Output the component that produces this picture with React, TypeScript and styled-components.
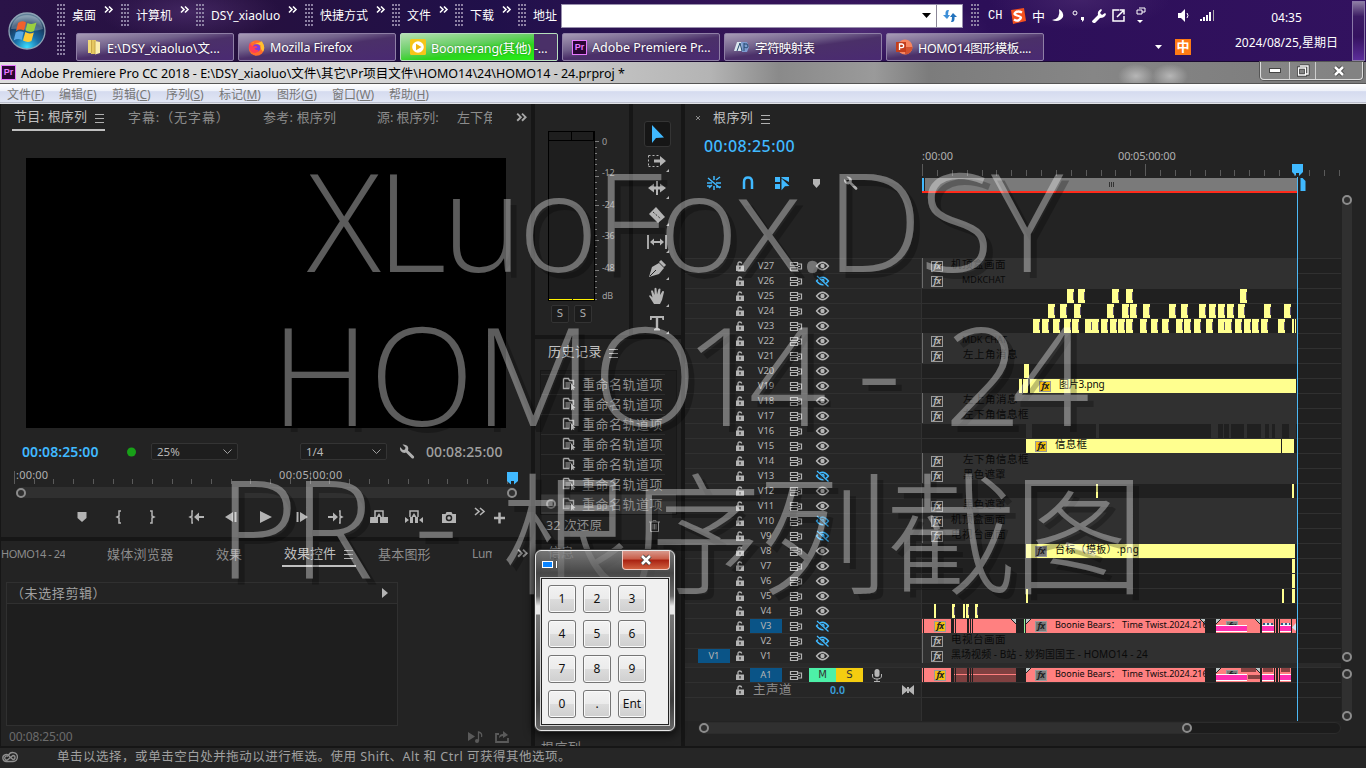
import React from 'react';
import styled, { createGlobalStyle, css } from 'styled-components';

const UI = `"Noto Sans", "Noto Sans CJK SC", sans-serif`;
const BLUE = '#40b9ff';

const GlobalStyle = createGlobalStyle`
  * { box-sizing: border-box; }
  html, body { margin: 0; background: #161616; overflow: hidden; }
  body { font-family: ${UI}; font-size: 12px; color: #a8a8a8; }
  svg { display: block; flex: none; overflow: visible; }
`;

const Screen = styled.div`
  position: relative;
  width: 1366px;
  height: 768px;
  overflow: hidden;
  display: flex;
  flex-direction: column;
  background: #161616;
`;

const Label = styled.span<{ $c?: string; $s?: number; $ls?: number; $ml?: number; $w?: number; $b?: number }>`
  display: block;
  flex: none;
  white-space: nowrap;
  overflow: ${p => (p.$w ? 'hidden' : 'visible')};
  color: ${p => p.$c ?? '#a0a0a0'};
  font-size: ${p => p.$s ?? 13}px;
  letter-spacing: ${p => p.$ls ?? 0}px;
  margin-left: ${p => p.$ml ?? 0}px;
  width: ${p => (p.$w ? `${p.$w}px` : 'auto')};
  font-weight: ${p => p.$b ?? 400};
  line-height: 18px;
`;

const Gap = styled.div<{ $w: number }>`
  flex: none;
  width: ${p => p.$w}px;
`;

/* ---------- Taskbar ---------- */

const Taskbar = styled.header`
  height: 62px;
  flex: none;
  display: flex;
  color: #fff;
  background:
    radial-gradient(ellipse 90px 30px at 190px 12px, #4f3070aa, transparent),
    radial-gradient(ellipse 130px 34px at 860px 30px, #53307acc, transparent),
    radial-gradient(ellipse 90px 30px at 1080px 0, #4a2a70aa, transparent),
    linear-gradient(90deg, #2a1348 0, #26103f 18%, #20104a 36%, #351458 55%, #2c0f58 72%, #32125f 100%);
  border-bottom: 1px solid #1a0a30;
`;
const StartArea = styled.div`
  width: 57px;
  flex: none;
  padding: 12px 0 0 8px;
`;
const Bars = styled.div`
  width: 931px;
  flex: none;
  display: flex;
  flex-direction: column;
`;
const QuickRow = styled.div`
  display: flex;
  align-items: center;
  height: 31px;
`;
const Toolbar = styled.div<{ $w: number }>`
  width: ${p => p.$w}px;
  flex: none;
  display: flex;
  align-items: center;
`;
const Grip = styled.i`
  width: 9px;
  height: 23px;
  margin-right: 6px;
  flex: none;
  background-image: radial-gradient(circle at 1px 1px, #8f83a5 0.7px, transparent 1px);
  background-size: 3px 4px;
`;
const More = styled.span`
  margin: -14px 0 0 8px;
  height: 6px;
`;
const Address = styled.div`
  display: flex;
  width: 402px;
  height: 24px;
  margin-left: 4px;
  border: 1px solid #9990ad;
  background: #fff;
  align-items: center;
  justify-content: flex-end;
`;
const RefreshBox = styled.div`
  width: 26px;
  height: 22px;
  margin-left: 5px;
  border-left: 1px solid #8b8798;
  display: grid;
  place-items: center;
`;
const TaskRow = styled.div`
  display: flex;
  align-items: flex-start;
  height: 30px;
  padding-top: 2px;
`;
const TaskButton = styled.div<{ $progress?: boolean }>`
  width: 158px;
  height: 28px;
  flex: none;
  margin-right: 4px;
  display: flex;
  align-items: center;
  padding-left: 9px;
  gap: 5px;
  border: 1px solid #8f7fa6;
  border-radius: 2px;
  overflow: hidden;
  white-space: nowrap;
  font-size: 12.5px;
  background: linear-gradient(172deg, #a79bb6 0, #71608a 35%, #4b3069 52%, #4a2a72 100%);
  ${p =>
    p.$progress &&
    css`
      border-color: #b6dfbc;
      background:
        linear-gradient(90deg, transparent 133px, #4a3068 133px),
        linear-gradient(172deg, #b5dfb2 0, #66ce62 40%, #2cd41e 60%, #26f416 100%);
    `}
`;
const TaskText = styled.span<{ $ls?: number }>`
  letter-spacing: ${p => p.$ls ?? 0}px;
  text-shadow: 0 0 2px #0006;
`;
const TrayCol = styled.div`
  width: 232px;
  flex: none;
`;
const TrayRow = styled.div`
  display: flex;
  align-items: center;
  height: 31px;
`;
const ClockCol = styled.div`
  width: 132px;
  flex: none;
  padding: 9px 0 0 1px;
`;
const Clock = styled.div`
  text-align: center;
  font-size: 12px;
  line-height: 17px;
`;
const DateLine = styled(Clock)`
  margin-top: 8px;
`;
const ShowDesktop = styled.div`
  width: 13px;
  height: 60px;
  margin-top: 1px;
  border: 1px solid #8a78a8;
  background: linear-gradient(#8d7da3, #3b1b63 25%, #35125f 60%, #5c2e9a);
`;
const ImeBadge = styled.div`
  width: 16px;
  height: 16px;
  background: #ff7a14;
  font-size: 13px;
  font-weight: 700;
  line-height: 15px;
  text-align: center;
`;
const LangCode = styled.span`
  width: 22px;
  font: 12px "Liberation Mono", monospace;
`;

const Orb = () => (
  <svg width="38" height="38" viewBox="0 0 38 38">
    <defs>
      <radialGradient id="orb" cx=".5" cy=".95" r=".85">
        <stop offset="0" stopColor="#3be0ff" />
        <stop offset=".4" stopColor="#1a6fa8" />
        <stop offset=".8" stopColor="#17375c" />
        <stop offset="1" stopColor="#5f7f98" />
      </radialGradient>
    </defs>
    <circle cx="19" cy="19" r="18" fill="url(#orb)" stroke="#8ea3b5" strokeWidth="1.3" />
    <path d="M3 17Q6 3 19 3T35 17Q27 20 19 18T3 17" fill="#fff" opacity=".25" />
    <path d="M10 11q4-3 8-.5l-2 8q-4-2-8 .5z" fill="#f0602c" />
    <path d="M19.500 11q4 2 9-.5l-2.500 8.500q-4 2-8.500-.5z" fill="#9bcf3f" />
    <path d="M7.700 20.500q4-2.300 8-.5l-2 8q-4-2-8 .5z" fill="#5aa9e8" />
    <path d="M17.300 20q4 2.500 8.500.5l-2.300 8.500q-4 2-8.500-.5z" fill="#ffcb35" />
  </svg>
);
const Chev = ({ c = '#fff', s = 1 }: { c?: string; s?: number }) => (
  <svg width={9 * s} height={7 * s} viewBox="0 0 9 7">
    <path d="M1 .5 4 3.500 1 6.500M5 .5 8 3.500 5 6.500" fill="none" stroke={c} strokeWidth="1.600" />
  </svg>
);
const Folder = () => (
  <svg width="16" height="16" viewBox="0 0 16 16">
    <path d="M2 1h4v13H2z" fill="#f1d979" />
    <path d="M5 1h5v14H5z" fill="#e6c760" />
    <path d="M9 2l5 1v11l-5 1.500z" fill="#fbeeb0" />
    <path d="M5.500 1v13M9 2v13" stroke="#c9a647" />
  </svg>
);
const Firefox = () => (
  <svg width="17" height="17" viewBox="0 0 16 16">
    <circle cx="8" cy="8.500" r="7.300" fill="#ff6a2b" />
    <path d="M3 3Q8 5 13 2q4 6 1 10-3-3-2-6-4-2-9-3" fill="#ffc02e" />
    <circle cx="8" cy="8.500" r="3.500" fill="#7a3fe0" />
    <path d="M2 3q0 3 3 4 3-1 4 1l-3 1q1 2 4 1-2 5-7 2-4-4-1-9" fill="#ff3f55" />
  </svg>
);
const Player = () => (
  <svg width="16" height="16" viewBox="0 0 16 16">
    <rect width="16" height="16" rx="1.500" fill="#f6c619" />
    <circle cx="8" cy="8" r="5.800" fill="#fff" />
    <path d="M6 4.700 11.500 8 6 11.300z" fill="#f0b40f" />
  </svg>
);
const PrLogo = styled.div`
  width: 15px;
  height: 15px;
  flex: none;
  background: #2a0634;
  border: 1px solid #e878ff;
  color: #e878ff;
  font: 700 9px/12px "Liberation Sans", sans-serif;
  letter-spacing: 0;
  text-align: center;
`;
const CharMap = () => (
  <svg width="16" height="12" viewBox="0 0 16 12">
    <path d="M0 10 3 1h5l3 9z" fill="#dbe8ef" />
    <path d="M7 1h6l2 5-2 5H8z" fill="#7d9bd0" />
    <path d="M3 10 6 2l2 8M10 2v8M10 3q4-1 4 2t-4 1" stroke="#254a70" fill="none" />
  </svg>
);
const Ppt = () => (
  <svg width="17" height="16" viewBox="0 0 17 16">
    <circle cx="9" cy="8" r="7.500" fill="#f6855f" />
    <path d="M9 8h7.500A7.500 7.500 0 0 1 9 15.500z" fill="#d35230" />
    <rect x="0" y="3" width="10" height="10" fill="#c43e1c" />
    <path d="M3.500 11V5h2.300a1.800 1.800 0 0 1 0 3.700H3.500" fill="none" stroke="#fff" strokeWidth="1.300" />
  </svg>
);

const quick: [string, number, number][] = [
  ['桌面', 64, 0],
  ['计算机', 75, 0],
  ['DSY_xiaoluo', 109, 0.05],
  ['快捷方式', 87, 0],
  ['文件', 63, 0],
  ['下载', 63, 0],
];

const TaskbarView = () => (
  <Taskbar>
    <StartArea>
      <Orb />
    </StartArea>
    <Bars>
      <QuickRow>
        {quick.map(([t, w, ls]) => (
          <Toolbar $w={w} key={t}>
            <Grip />
            <Label $c="#fff" $s={12} $ls={ls}>{t}</Label>
            <More><Chev /></More>
          </Toolbar>
        ))}
        <Toolbar $w={453}>
          <Grip />
          <Label $c="#fff" $s={12}>地址</Label>
          <Address>
            <svg width="9" height="5"><path d="M0 0h9L4.500 5z" fill="#000" /></svg>
            <RefreshBox>
              <svg width="16" height="14" viewBox="0 0 16 14">
                <path d="M6 1Q3 1 3.500 6H1l4 4 3-4H6q0-3 1-5z" fill="#3d8fd8" />
                <path d="M10 13q3 0 2.500-5H15l-4-4-3 4h2q0 3-1 5z" fill="#2272bd" />
              </svg>
            </RefreshBox>
          </Address>
        </Toolbar>
        <Grip />
      </QuickRow>
      <TaskRow>
        <Grip />
        <Gap $w={4} />
        <TaskButton><Folder /><TaskText $ls={-0.05}>E:\DSY_xiaoluo\文...</TaskText></TaskButton>
        <TaskButton><Firefox /><TaskText $ls={-0.15}>Mozilla Firefox</TaskText></TaskButton>
        <TaskButton $progress><Player /><TaskText $ls={-0.15}>Boomerang(其他) -...</TaskText></TaskButton>
        <TaskButton><PrLogo>Pr</PrLogo><TaskText $ls={0}>Adobe Premiere Pr...</TaskText></TaskButton>
        <TaskButton><CharMap /><TaskText $ls={-0.6}>字符映射表</TaskText></TaskButton>
        <TaskButton><Ppt /><TaskText $ls={-0.35}>HOMO14图形模板....</TaskText></TaskButton>
      </TaskRow>
    </Bars>
    <TrayCol>
      <TrayRow>
        <LangCode>CH</LangCode>
        <svg width="16" height="16" viewBox="0 0 16 16">
          <path d="M1 2 14 0l2 13-13 3z" fill="#f4511e" />
          <path d="M12 4.500Q8 2.500 5.500 4.500T7 7.500t4 2T9 12 4 11.500" fill="none" stroke="#fff" strokeWidth="2.300" />
        </svg>
        <Gap $w={6} />
        <Label $c="#fff" $s={13} $w={20}>中</Label>
        <svg width="12" height="13" viewBox="0 0 12 13"><path d="M7 0q5 3 4 8-4 6-11 3 9-1 7-11" fill="#fff" /></svg>
        <Gap $w={8} />
        <svg width="14" height="12" viewBox="0 0 14 12">
          <circle cx="3" cy="3" r="2" fill="none" stroke="#fff" /><path d="M9 7h3v3l-2 2v-2H9z" fill="#fff" />
        </svg>
        <Gap $w={6} />
        <svg width="14" height="14" viewBox="0 0 14 14"><path d="M0 12 6 6Q5 2 9 0l1 1-2 3 2 2 3-2 1 1q-1 4-6 4l-5 5q-3 0-3-2" fill="#fff" /></svg>
        <Gap $w={6} />
        <svg width="13" height="13" viewBox="0 0 13 13"><path d="M7 1H1v11h11V7M5 8l6-6M7.500 1H12v4.500" fill="none" stroke="#fff" strokeWidth="1.500" /></svg>
        <Gap $w={11} />
        <svg width="10" height="17" viewBox="0 0 10 17"><path d="M3 1h6v4M1 3h5v4H1zM6 5h3" fill="none" stroke="#fff" /><path d="M1 13h6L4 16z" fill="#fff" /></svg>
        <Gap $w={32} />
        <svg width="13" height="13" viewBox="0 0 13 13"><path d="M0 4h3l4-4v13L3 9H0z" fill="#fff" /><path d="M9 4q2 2.500 0 5" stroke="#fff" fill="none" /></svg>
        <Gap $w={9} />
        <svg width="16" height="11" viewBox="0 0 16 11"><path d="M1 11V9M4 11V7M7 11V5M10 11V2" stroke="#fff" strokeWidth="2" /><path d="M13.500 11V0" stroke="#aaa" /></svg>
      </TrayRow>
      <TrayRow>
        <Gap $w={167} />
        <svg width="7" height="4"><path d="M0 0h7L3.500 4z" fill="#fff" /></svg>
        <Gap $w={13} />
        <ImeBadge>中</ImeBadge>
      </TrayRow>
    </TrayCol>
    <ClockCol>
      <Clock>04:35</Clock>
      <DateLine>2024/08/25,星期日</DateLine>
    </ClockCol>
    <ShowDesktop />
  </Taskbar>
);

/* ---------- Title and menu ---------- */

const TitleBar = styled.div`
  height: 22px;
  flex: none;
  display: flex;
  align-items: center;
  padding-left: 1px;
  gap: 5px;
  color: #000;
  font-size: 12.5px;
  letter-spacing: 0;
  white-space: nowrap;
  background:
    radial-gradient(ellipse 18px 12px at 1136px 14px, #b6b6b6, transparent),
    radial-gradient(ellipse 18px 12px at 1170px 14px, #b6b6b6, transparent),
    linear-gradient(90deg, #dedede 0, #d4d4d4 35%, #b4b4b4 52%, #8a8a8a 57%, #9a9a9a 64%, #7c7c7c 68%, #868686 80%, #7a7a7a 100%);
  border-bottom: 1px solid #555;
`;
const WindowButtons = styled.div`
  margin: -3px 3px 0 auto;
  display: flex;
  width: 103px;
  height: 18px;
  border: 1px solid #ddd;
  border-top: 0;
  border-radius: 0 0 4px 4px;
  background: #8b8b8b88;
  box-shadow: 0 0 0 1px #555;
`;
const WinBtn = styled.div<{ $w: number }>`
  width: ${p => p.$w}px;
  display: grid;
  place-items: center;
  & + & { border-left: 1px solid #ccc; }
`;
const MenuBar = styled.nav`
  height: 20px;
  flex: none;
  display: flex;
  align-items: center;
  padding-left: 7px;
  background: linear-gradient(#fff 0, #eef1f9 35%, #d5dbef 38%, #e1e6f4 90%, #b8bccb 92%, #f4f4f4 100%);
`;
const MenuItem = styled.span<{ $w: number }>`
  width: ${p => p.$w}px;
  flex: none;
  font-size: 12px;
  color: #777;
  letter-spacing: -0.05px;
`;
const menus: [string, string, number][] = [
  ['文件', 'F', 52], ['编辑', 'E', 53], ['剪辑', 'C', 54], ['序列', 'S', 53],
  ['标记', 'M', 58], ['图形', 'G', 55], ['窗口', 'W', 57], ['帮助', 'H', 60],
];

/* ---------- Workspace ---------- */

const Workspace = styled.main`
  height: 642px;
  flex: none;
  display: flex;
  gap: 4px;
  padding-left: 1px;
`;
const Column = styled.div<{ $w: number }>`
  width: ${p => p.$w}px;
  flex: none;
  display: flex;
  flex-direction: column;
  gap: 4px;
`;
const Panel = styled.section<{ $h?: number; $w?: number }>`
  background: #232323;
  flex: none;
  height: ${p => (p.$h ? `${p.$h}px` : 'auto')};
  width: ${p => (p.$w ? `${p.$w}px` : 'auto')};
  overflow: hidden;
  display: flex;
  flex-direction: column;
`;
const Row = styled.div<{ $h: number; $pl?: number; $mt?: number; $pb?: number }>`
  height: ${p => p.$h}px;
  flex: none;
  display: flex;
  align-items: center;
  padding-left: ${p => p.$pl ?? 0}px;
  padding-bottom: ${p => p.$pb ?? 0}px;
  margin-top: ${p => p.$mt ?? 0}px;
`;
const Tab = styled.div<{ $active?: boolean; $w: number }>`
  display: flex;
  flex: none;
  align-items: center;
  width: ${p => p.$w}px;
  height: 27px;
  padding-left: 2px;
  gap: 8px;
  border-bottom: 2px solid ${p => (p.$active ? '#c0c0c0' : 'transparent')};
`;
const BurgerSvg = styled.svg`
  margin-top: 4px;
`;
const Burger = () => (
  <BurgerSvg width="9" height="9" viewBox="0 0 9 9"><path d="M0 .5h9M0 4.500h9M0 8.500h9" stroke="#b0b0b0" /></BurgerSvg>
);

const Video = styled.div`
  width: 480px;
  height: 270px;
  margin: 27px 0 0 25px;
  background: #000;
  flex: none;
`;
const Select = styled.div<{ $w: number }>`
  width: ${p => p.$w}px;
  height: 17px;
  border: 1px solid #343434;
  border-radius: 2px;
  background: #1e1e1e;
  display: flex;
  align-items: center;
  justify-content: space-between;
  padding: 0 5px;
  font-size: 11.5px;
  color: #b8b8b8;
`;
const Down = () => (
  <svg width="9" height="5" viewBox="0 0 9 5"><path d="M.5.5l4 4 4-4" fill="none" stroke="#a0a0a0" /></svg>
);
const Wrench = () => (
  <svg width="15" height="15" viewBox="0 0 15 15">
    <path d="M2.500.5 5.500 3.500 5 5.500 3 6 0 3q-.5 4 2.500 5.500 2 .8 3.500 0L11.500 14q1 1 2.200.2 1-1.200 0-2.200L8 6.500Q9 4 7.500 2 5.500 0 2.500.5z" fill="#b0b0b0" />
  </svg>
);
const RulerBox = styled.div<{ $h: number }>`
  position: relative;
  height: ${p => p.$h}px;
  flex: none;
`;
const RulerLabel = styled.span<{ $x: number; $top: number; $ls?: number }>`
  position: absolute;
  left: ${p => p.$x}px;
  top: ${p => p.$top}px;
  font-size: 11px;
  line-height: 12px;
  letter-spacing: ${p => p.$ls ?? 0}px;
  color: #b0b0b0;
`;
const ZoomTrack = styled.div`
  width: 501px;
  height: 11px;
  margin: 4px 0 0 15px;
  flex: none;
  border-radius: 6px;
  background: #303030;
  display: flex;
  justify-content: space-between;
  align-items: center;
`;
const Knob = styled.i`
  width: 10px;
  height: 10px;
  flex: none;
  border: 2px solid #8c8c8c;
  border-radius: 50%;
`;
const G = '#b4b4b4';
const transport: [number, React.ReactNode][] = [
  [82, <path key="a" d="M-4.500-5h9v6L0 5l-4.500-4z" fill={G} />],
  [119, <path key="b" d="M2-6H0v5l-2 1 2 1v5h2" stroke={G} strokeWidth="1.500" fill="none" />],
  [152, <path key="c" d="M-2-6H0v5l2 1-2 1v5h-2" stroke={G} strokeWidth="1.500" fill="none" />],
  [197, <g key="d"><path d="M-4-6h-1v5l-2 1 2 1v5h1" stroke={G} strokeWidth="1.500" fill="none" /><path d="M-3 0 2-4.500V-1h5v2H2v3.500z" fill={G} /></g>],
  [231, <path key="e" d="M-6 0 2-5V5zM3.500-5h2V5h-2z" fill={G} />],
  [266, <path key="f" d="M-6-6 6 0-6 6z" fill={G} />],
  [302, <path key="g" d="M6 0-2-5V5zM-3.500-5h-2V5h2z" fill={G} />],
  [335, <g key="h"><path d="M4-6h1v5l2 1-2 1v5h-1" stroke={G} strokeWidth="1.500" fill="none" /><path d="M3 0-2-4.500V-1h-5v2h5v3.500z" fill={G} /></g>],
  [379, <g key="i"><path d="M-9 0h8v6h-8zM1 0h8v6h-8z" fill={G} /><path d="M-4 0v-6h8v6" stroke={G} strokeWidth="1.500" fill="none" /><path d="M0-4l2.500 4h-5z" fill={G} /></g>],
  [414, <g key="j"><path d="M-9 0l4 3-4 3zM9 0 5 3l4 3zM-4 0h3v6h-3zM1 0h3v6H1z" fill={G} /><path d="M-4 0v-6h8v6" stroke={G} strokeWidth="1.500" fill="none" /><path d="M0-4l2.500 4h-5z" fill={G} /></g>],
  [449, <g key="k"><path d="M-7-3h3.500l1-2h5l1 2H7v9H-7z" fill={G} /><circle cx="0" cy="1" r="2.500" fill="none" stroke="#232323" strokeWidth="1.500" /></g>],
  [480, <path key="l" d="M-5-9l4 3.500-4 3.500M0-9l4 3.500L0-2" stroke={G} strokeWidth="1.600" fill="none" />],
  [499, <path key="m" d="M-5 1H6M.5-4.500v11" stroke={G} strokeWidth="2.500" fill="none" />],
];

const ProgramPanel = () => (
  <Panel $h={433}>
    <Row $h={27} $pl={11} $pb={1}>
      <Tab $active $w={93}><Label $c="#c0c0c0" $ls={0.2}>节目: 根序列</Label><Burger /></Tab>
      <Label $ml={23} $w={110} $c="#8c8c8c" $ls={0.9}>字幕:（无字幕）</Label>
      <Label $ml={25} $w={90} $c="#8c8c8c" $ls={0.2}>参考: 根序列</Label>
      <Label $ml={24} $w={66} $c="#8c8c8c" $ls={-0.1}>源: 根序列:</Label>
      <Label $ml={14} $w={35} $c="#8c8c8c">左下角</Label>
      <Gap $w={24} />
      <Chev c="#a8a8a8" s={1.2} />
    </Row>
    <Video />
    <Row $h={25} $mt={11}>
      <Label $ml={21} $w={104} $c={BLUE} $s={14} $b={600} $ls={0.08}>00:08:25:00</Label>
      <svg width="10" height="10"><circle cx="5.500" cy="5" r="4.500" fill="#18a018" /></svg>
      <Gap $w={15} />
      <Select $w={87}>25%<Down /></Select>
      <Gap $w={62} />
      <Select $w={87}>1/4<Down /></Select>
      <Gap $w={13} />
      <Wrench />
      <Label $ml={11} $c="#a0a0a0" $s={14} $b={500} $ls={0.1}>00:08:25:00</Label>
    </Row>
    <RulerBox $h={19}>
      <RulerLabel $x={15} $top={5} $ls={0.2}>:00:00</RulerLabel>
      <RulerLabel $x={278} $top={5} $ls={0.4}>00:05:00:00</RulerLabel>
      <svg width="530" height="19">
        {Array.from({ length: 26 }, (_, i) => (
          <path key={i} d={`M${Math.round(13 + i * 19.700) + 0.5} ${i % 15 === 0 ? 7 : 15}V20`} stroke="#5a5a5a" />
        ))}
        <g transform="translate(506 8)"><path d="M0 0h11v9l-4 3.500V9H4v3.500L0 9z" fill={BLUE} /></g>
      </svg>
    </RulerBox>
    <ZoomTrack><Knob /><Knob /></ZoomTrack>
    <Row $h={38}>
      <svg width="530" height="30">
        {transport.map(([x, g]) => <g key={x} transform={`translate(${x - 1} 15)`}>{g}</g>)}
      </svg>
    </Row>
  </Panel>
);

const EffectBox = styled.div`
  width: 392px;
  height: 144px;
  margin: 14px 0 0 5px;
  flex: none;
  border: 1px solid #303030;
  background: #1e1e1e;
`;
const EffectHead = styled.div`
  height: 21px;
  display: flex;
  align-items: center;
  justify-content: space-between;
  padding: 0 9px 1px 4px;
  background: #232323;
  border-bottom: 1px solid #303030;
`;
const EffectPanel = () => (
  <Panel $h={205}>
    <Row $h={27} $pb={2}>
      <Label $ml={0} $w={64} $s={11} $c="#8c8c8c" $ls={-0.5}>HOMO14 - 24</Label>
      <Label $ml={42} $w={67} $c="#8c8c8c" $ls={0.3}>媒体浏览器</Label>
      <Label $ml={42} $w={28} $c="#8c8c8c">效果</Label>
      <Gap $w={38} />
      <Tab $active $w={74}><Label $c="#c0c0c0">效果控件</Label><Burger /></Tab>
      <Label $ml={22} $w={54} $c="#8c8c8c" $ls={0.2}>基本图形</Label>
      <Label $ml={40} $w={20} $s={12} $c="#8c8c8c" $ls={-0.3}>Lumetri</Label>
      <Gap $w={25} />
      <Chev c="#a8a8a8" s={1.2} />
    </Row>
    <EffectBox>
      <EffectHead>
        <Label $c="#a0a0a0" $ls={0.6}>（未选择剪辑）</Label>
        <svg width="6" height="10"><path d="M0 0l6 5-6 5z" fill="#b4b4b4" /></svg>
      </EffectHead>
    </EffectBox>
    <Row $h={21} $pl={8}>
      <Label $s={12} $c="#6c6c6c" $ls={-0.1} $w={459}>00:08:25:00</Label>
      <svg width="15" height="12" viewBox="0 0 15 12"><path d="M0 1l7 4.500L0 10z" fill="#5a5a5a" /><path d="M10.500 10V1q4 1 3 5" fill="none" stroke="#5a5a5a" strokeWidth="1.300" /><circle cx="9" cy="10" r="2" fill="#5a5a5a" /></svg>
      <Gap $w={12} />
      <svg width="14" height="12" viewBox="0 0 14 12"><path d="M4 3H1v8h12V7" fill="none" stroke="#5a5a5a" strokeWidth="1.800" /><path d="M4 7q0-4 4-4V0l5 4-5 3V5q-2 0-4 2" fill="#5a5a5a" /></svg>
    </Row>
  </Panel>
);

/* ---------- Meters & tools ---------- */

const Split = styled.div`
  display: flex;
  gap: 4px;
  flex: none;
`;
const MeterBody = styled.div`
  display: flex;
  margin: 27px 0 0 13px;
`;
const Meter = styled.div`
  width: 47px;
  height: 170px;
  border: 1px solid #000;
  background: #1e1e1e;
  display: grid;
  grid-template-columns: 1fr 1fr;
  grid-template-rows: 9px 1fr;
`;
const MeterCell = styled.div<{ $bar?: boolean }>`
  border-bottom: ${p => (p.$bar ? '1px solid #fff200' : '1px solid #000')};
  border-right: ${p => (p.$bar ? 0 : '1px solid #000')};
`;
const MeterGap = styled(MeterCell)`
  margin-left: 1px;
`;
const Scale = styled.div`
  width: 22px;
  margin: 4px 0 0 2px;
  display: flex;
  flex-direction: column;
  font-size: 9px;
  line-height: 14px;
  letter-spacing: -0.3px;
`;
const ScaleMark = styled.span<{ $h: number }>`
  height: ${p => p.$h}px;
  color: #a0a0a0;
`;
const SoloRow = styled.div`
  display: flex;
  gap: 5px;
  margin: 4px 0 0 16px;
`;
const Solo = styled.div`
  width: 18px;
  height: 18px;
  border: 1px solid #333;
  border-radius: 2px;
  background: #1c1c1c;
  text-align: center;
  font: 10px/16px "DejaVu Sans", sans-serif;
  color: #a8a8a8;
`;
const ToolList = styled.div`
  display: flex;
  flex-direction: column;
  align-items: center;
  padding-top: 17px;
`;
const ToolCell = styled.div<{ $active?: boolean }>`
  width: 27px;
  height: ${p => (p.$active ? 26 : 27)}px;
  display: grid;
  place-items: center;
  border: 1px solid ${p => (p.$active ? '#343434' : 'transparent')};
  border-radius: 3px;
  background: ${p => (p.$active ? '#161616' : 'transparent')};
`;
const tools: React.ReactNode[] = [
  <path key="0" d="M-5-9 7 3.500-1 4-5 9z" fill={BLUE} />,
  <g key="1"><path d="M-8.500-5.500h10M-8.500 5.500h10M-8.500-5.500v11" stroke={G} strokeDasharray="2 2" fill="none" /><path d="M-3-1.500h6V-5L9 0 3 5V1.500h-6z" fill={G} /></g>,
  <path key="2" d="M-1-7h2V7h-2zM-9 0l6-4.500v3h2v3h-2v3zM9 0 3 4.500v-3H1v-3h2v-3z" fill={G} />,
  <g key="3"><path d="M-8-1-1-8 8 2 1 8z" fill={G} /><path d="M-4-3 4 4" stroke="#333" strokeDasharray="2 1.500" /></g>,
  <g key="4"><path d="M-9-7V7M9-7V7" stroke={G} strokeWidth="1.800" /><path d="M-7 0l4-3.500v2.500h6v-2.500L7 0 3 3.500V1h-6v2.500z" fill={G} /></g>,
  <g key="5"><path d="M-8 8-5-2 2-6 7-1 2 5z" fill={G} /><path d="M3-8 8-3" stroke={G} strokeWidth="3" /><path d="M-7 7-1 1" stroke="#232323" /></g>,
  <path key="6" d="M-3 8-8 0q1-2 3 1l.5.5L-6-5q1-1.500 2 0l1.500 4L-2.500-7.500q1-1.500 2 0L0-1.500 1.500-7q1.500-1 2 0L3-1 5.500-5q1.500-.5 1.500 1L5 4 3 8z" fill={G} />,
  <path key="7" d="M-7-7H7v4H5.500L5-5H1.200V5L3 6v1.500h-6V6l1.800-1V-5H-5l-.5 2H-7z" fill={G} />,
];

/* ---------- History ---------- */

const HistoryBox = styled.div`
  width: 137px;
  height: 145px;
  margin: 4px 0 0 5px;
  border: 1px solid #181818;
  background: #1e1e1e;
  flex: none;
  padding-top: 3px;
`;
const HistoryItem = styled.div<{ $sel?: boolean }>`
  height: 20px;
  width: ${p => (p.$sel ? 135 : 124)}px;
  display: flex;
  align-items: center;
  padding-bottom: 1px;
  border-top: 1px solid #2c2c2c;
  background: ${p => (p.$sel ? '#383838' : 'transparent')};
`;
const HistIcon = () => (
  <svg width="12" height="12" viewBox="0 0 12 12">
    <path d="M.5.500h5l1 2h4V7M.5.500v10h6" fill="none" stroke="#a8a8a8" strokeWidth="1.400" />
    <path d="M2.500 5H8M2.500 7H7M2.500 9H7" stroke="#a8a8a8" />
    <path d="M8 5l4.500 5-2 .2 1 2-2-1L8 12.500z" fill="#b4b4b4" />
  </svg>
);

const MiddleColumn = () => (
  <Column $w={146}>
    <Split>
      <Panel $w={94} $h={231}>
        <MeterBody>
          <Meter><MeterCell /><MeterCell /><MeterCell $bar /><MeterGap $bar /></Meter>
          <svg width="5" height="170">
            {Array.from({ length: 28 }, (_, i) => (
              <path key={i} d={`M0 ${Math.round(10 + i * 5.850) + 0.5}H${i % 5.400 < 1 ? 4 : 2}`} stroke="#7c7c7c" />
            ))}
          </svg>
          <Scale>
            <ScaleMark $h={31}>0</ScaleMark>
            <ScaleMark $h={32}>-12</ScaleMark>
            <ScaleMark $h={31}>-24</ScaleMark>
            <ScaleMark $h={32}>-36</ScaleMark>
            <ScaleMark $h={28}>-48</ScaleMark>
            <ScaleMark $h={12}>dB</ScaleMark>
          </Scale>
        </MeterBody>
        <SoloRow><Solo>S</Solo><Solo>S</Solo></SoloRow>
      </Panel>
      <Panel $w={48} $h={231}>
        <ToolList>
          {tools.map((g, i) => (
            <ToolCell key={i} $active={i === 0}>
              <svg width="24" height="24" viewBox="-12 -12 24 24">
                {g}
                {i > 0 && <path d="M12 8v3H9z" fill={G} />}
              </svg>
            </ToolCell>
          ))}
        </ToolList>
      </Panel>
    </Split>
    <Panel $h={201}>
      <Row $h={27} $pl={13} $pb={3}><Label $c="#c0c0c0" $ls={0.5}>历史记录</Label><Gap $w={7} /><Burger /></Row>
      <HistoryBox>
        {Array.from({ length: 7 }, (_, i) => (
          <HistoryItem key={i} $sel={i === 6}>
            {i === 6 ? <><Gap $w={5} /><Knob /><Gap $w={7} /></> : <Gap $w={22} />}
            <HistIcon />
            <Label $ml={7} $c="#8f8f8f" $ls={0.5}>重命名轨道项</Label>
          </HistoryItem>
        ))}
      </HistoryBox>
      <Row $h={22} $pl={11}>
        <Label $s={12.5} $c="#909090" $w={103} $ls={0.2}>32 次还原</Label>
        <svg width="11" height="12" viewBox="0 0 11 12"><path d="M0 2h11M4 2V.5h3V2M1.500 2v9.500h8V2M4 4v5.500M5.500 4v5.500M7 4v5.500" fill="none" stroke="#909090" /></svg>
      </Row>
    </Panel>
    <Panel $h={202}>
      <Row $h={16} $pl={13}><Label $c="#8c8c8c">信息</Label></Row>
      <Row $h={22} $pl={6} $mt={176}><Label $c="#8c8c8c" $ls={0.4}>根序列</Label></Row>
    </Panel>
  </Column>
);

/* ---------- Timeline ---------- */

const TimelinePanel = styled(Panel)`
  width: 681px;
  height: 642px;
`;
const TopArea = styled.div`
  display: flex;
  height: 154px;
  flex: none;
`;
const TopLeft = styled.div`
  width: 237px;
  display: flex;
  flex-direction: column;
`;
const TopRight = styled.div`
  flex: 1;
  padding-top: 44px;
`;
const WorkBar = styled.div`
  display: flex;
  width: 384px;
  height: 15px;
  align-items: flex-start;
`;
const WorkFill = styled.div`
  width: 376px;
  height: 15px;
  background: linear-gradient(90deg, ${BLUE} 2px, #222 2px, #222 3px, #7a7a7a 3px);
  border-bottom: 2px solid #ff2a1a;
  display: grid;
  place-items: center;
`;
const Tracks = styled.div`
  display: flex;
  height: 463px;
  flex: none;
`;
const TrackTable = styled.div`
  width: 656px;
  height: 463px;
  position: relative;
  background: linear-gradient(90deg, #262626 236px, #303030 236px, #303030 237px, #202020 237px);
`;
const TrackRow = styled.div`
  display: grid;
  grid-template-columns: 237px 419px;
  height: 15px;
  border-top: 1px solid #303030;
`;
const HeadArea = styled.div`
  display: flex;
  align-items: center;
  height: 14px;
`;
const SourcePatch = styled.div`
  width: 51px;
  padding-left: 13px;
`;
const Badge = styled.span<{ $on?: boolean }>`
  display: block;
  width: 32px;
  height: 14px;
  font-size: 9.5px;
  line-height: 14px;
  text-align: center;
  color: #b4b4b4;
  background: ${p => (p.$on ? '#0a5487' : 'transparent')};
`;
const Toggle = styled.span<{ $c: string }>`
  width: 27px;
  height: 14px;
  font: 10px/14px "DejaVu Sans", sans-serif;
  text-align: center;
  color: #333;
  background: ${p => p.$c};
`;
const Lane = styled.div`
  position: relative;
  height: 14px;
`;
const Clip = styled.div<{ $x: number; $w: number; $c: string }>`
  position: absolute;
  top: 0;
  bottom: 0;
  left: ${p => p.$x - 922}px;
  width: ${p => p.$w}px;
  background: ${p => p.$c};
  overflow: hidden;
  display: flex;
  align-items: flex-start;
`;
const Mark = styled(Clip)`
  &::after {
    content: '';
    position: absolute;
    right: 0;
    top: 3px;
    height: 8px;
    width: 1px;
    background: #5d5068;
  }
`;
const GrayLane = styled.div`
  position: absolute;
  left: 0;
  top: -1px;
  width: 375px;
  height: 15px;
  background: #303030;
  border-left: 1px solid #6a6a6a;
`;
const Fx = styled.span<{ $x: number; $c?: string }>`
  position: absolute;
  left: ${p => p.$x}px;
  top: 2px;
  width: 12px;
  height: 11px;
  border: 1px solid #9a9a9a;
  background: ${p => p.$c ?? '#303030'};
  color: ${p => (p.$c ? '#222' : '#b4b4b4')};
  font: italic 700 9px/8px "Noto Sans", sans-serif;
  text-align: center;
  letter-spacing: -0.5px;
`;
const ClipText = styled.span<{ $x: number; $ls?: number; $s?: number }>`
  position: absolute;
  left: ${p => p.$x}px;
  top: -1px;
  white-space: nowrap;
  font-size: ${p => p.$s ?? 10.5}px;
  line-height: 13px;
  letter-spacing: ${p => p.$ls ?? 0}px;
  color: #0a0a0a;
`;

const Lock = () => (
  <svg width="9" height="10" viewBox="0 0 9 10"><path d="M2 5V2.500Q2 1 3.700 1t2 1.500" fill="none" stroke={G} strokeWidth="1.300" /><path d="M0 4.500h8V10H0z" fill={G} /><path d="M4 6v2.500" stroke="#262626" strokeWidth="1.200" /></svg>
);
const Sync = () => (
  <svg width="12" height="9" viewBox="0 0 12 9"><path d="M.5.500h7v3h-7zM.5 5.500h7v3h-7zM8 2h3.500v5H8M8 4.500h2" fill="none" stroke={G} strokeWidth="1.200" /></svg>
);
const Eye = ({ off }: { off?: boolean }) => (
  <svg width="13" height="10" viewBox="0 0 13 10">
    <path d="M.5 5Q6.500-2.500 12.500 5 6.500 12.500.5 5z" fill="none" stroke={off ? BLUE : G} strokeWidth="1.300" />
    <circle cx="6.500" cy="5" r="2.200" fill={off ? BLUE : G} />
    {off && <><path d="M1 1l11 10" stroke="#262626" strokeWidth="2.500" /><path d="M1 0l11.500 10.500" stroke={BLUE} strokeWidth="1.200" /></>}
  </svg>
);
const Mic = () => (
  <svg width="12" height="13" viewBox="0 0 12 13"><rect x="3.500" y="0" width="5" height="8" rx="2.500" fill={G} /><path d="M1.500 5v2q0 3 4.500 3t4.500-3V5M6 10v3M3 12.500h6" stroke={G} fill="none" /></svg>
);

const Y = '#ffff8f';
const P = '#ff8080';
const at = (list: number[], w: number): [number, number][] => list.map(n => [n, w]);

const smalls: Record<string, [number, number][]> = {
  V25: at([1067, 1078, 1112, 1126, 1240], 7),
  V24: at([1048, 1060, 1074, 1107, 1122, 1130, 1143, 1169, 1181, 1199, 1209, 1218, 1227, 1238, 1264, 1284], 6.500),
  V23: [
    ...at([1033, 1042, 1053, 1064, 1072, 1085, 1092, 1101, 1110, 1118, 1126, 1140, 1151, 1162, 1176, 1184, 1194, 1206, 1218, 1225, 1235, 1244, 1252, 1261, 1278], 6.500),
    [1292, 2], [1295, 1],
  ],
  V12: [[1096, 2], [1292, 2]],
  V5: [[1026, 2], [1282, 2], [1292, 2.500]],
  V4: [[934, 2], [952, 3], [963, 2], [966, 3], [975, 3]],
};
const plains: Record<string, [number, number][]> = {
  V20: [[1024, 5]],
  V19: [[1019, 3], [1023, 5], [1030, 266]],
  V15: [[1026, 255], [1282, 12]],
  V8: [[1026, 269]], V7: [[1292, 3]], V6: [[1292, 3]],
};
const grays: Record<string, [string, number, number, number]> = {
  V27: ['机顶盒画面', 29, 10.500, 0.500],
  V26: ['MDKCHAT', 40, 9, 0.100],
  V22: ['MDK CHAT', 40, 9, 0],
  V21: ['左上角消息', 41, 10.500, 0.500],
  V18: ['左上角消息', 41, 10.500, 0.500],
  V17: ['左下角信息框', 41, 10.500, 0.500],
  V14: ['左下角信息框', 41, 10.500, 0.500],
  V13: ['黑色遮罩', 41, 10.500, 0.200],
  V11: ['黑色遮罩', 41, 10.500, 0.200],
  V10: ['机顶盒画面', 29, 10.500, 0.500],
  V9: ['电视台画面', 29, 10.500, 0.500],
  V2: ['电视台画面', 29, 10.500, 0.500],
  V1: ['黑场视频 - B站 - 妙狗国国王 - HOMO14 - 24', 29, 10, 0.050],
};
const hidden = new Set(['V26', 'V13', 'V10', 'V9', 'V3', 'V2']);
const pinkLeft: [number, number][] = [[922, 1.300], [924, 1], [925, 26], [954, 1], [956, 11], [969, 1], [970.500, 1.500], [973, 18.500], [992, 23.500]];

const Corner = styled.i<{ $right?: boolean }>`
  flex: none;
  width: 5px;
  height: 5px;
  margin-left: ${p => (p.$right ? 'auto' : 0)};
  background: linear-gradient(${p => (p.$right ? '225deg' : '135deg')}, #b9c4c4 42%, #222 42%, #222 58%, transparent 58%);
`;
const Magenta = styled.i<{ $w: number }>`
  position: absolute;
  left: 0;
  top: 6px;
  width: ${p => p.$w}px;
  height: 7px;
  background: #ff2fb0;
  border-top: 1px solid #fff;
  border-bottom: 1px solid #fff;
`;
const Wave = styled.i<{ $x: number; $w: number; $light?: boolean }>`
  position: absolute;
  left: ${p => p.$x}px;
  top: ${p => (p.$light ? 4 : 0)}px;
  width: ${p => p.$w}px;
  height: ${p => (p.$light ? 2 : 4)}px;
  background: ${p => (p.$light ? 'repeating-linear-gradient(90deg, #2c5a80 0 2px, #cfe6f5 2px 4px)' : '#8a4242')};
`;
const WaveLow = styled(Wave)`
  top: 7px;
`;

const PinkLane = ({ audio }: { audio?: boolean }) => (
  <>
    {pinkLeft.map(([x, w], i) => (
      <Clip key={i} $x={x} $w={w} $c={audio && i > 2 ? `linear-gradient(#7f4040 6px, ${P} 6px, ${P} 7px, #7f4040 7px)` : P}>
        {i === 2 && <Fx $x={9} $c="#f4c010">fx</Fx>}
        {i === 8 && !audio && <Corner $right />}
      </Clip>
    ))}
    {!audio && <Clip $x={1024} $w={1} $c="#8ff09a" />}
    <Clip $x={1026} $w={179} $c={P}>
      <Corner />
      <Fx $x={9} $c="#777">fx</Fx>
      <ClipText $x={29} $s={9} $ls={-0.02}>Boonie Bears：&nbsp;Time Twist.2024.2160p</ClipText>
      {!audio && <Corner $right />}
    </Clip>
    <Clip $x={1216} $w={44} $c={P}>
      <Corner /><Fx $x={10} $c="#777">fx</Fx>
      <Corner $right />
      <Magenta $w={31} />
      {audio && <><Wave $x={25} $w={15} /><WaveLow $x={32} $w={12} /></>}
    </Clip>
    <Clip $x={1262} $w={12} $c={P}><Magenta $w={12} /><Wave $x={1} $w={10} $light={!audio} /></Clip>
    <Clip $x={1275} $w={1} $c={P} />
    <Clip $x={1278} $w={1} $c={P} />
    <Clip $x={1280} $w={11} $c={P}><Magenta $w={11} /><Wave $x={1} $w={9} $light={!audio} /></Clip>
    {!audio && (
      <Clip $x={1291.500} $w={4.500} $c={P}>
        <svg width="5" height="14"><path d="M5 3v10L0 8.500z" fill="#cfe6f5" /></svg>
      </Clip>
    )}
  </>
);

const darkCuts: [number, number][] = [[1032, 64], [1099, 112], [1218, 5], [1224, 5], [1231, 13], [1247, 14], [1265, 4], [1272, 3], [1282, 7]];

const LaneContent = ({ id }: { id: string }) => {
  if (id === 'V3' || id === 'A1') return <PinkLane audio={id === 'A1'} />;
  const g = grays[id];
  return (
    <>
      {g && <><GrayLane /><Fx $x={9}>fx</Fx><ClipText $x={g[1]} $s={g[2]} $ls={g[3]}>{g[0]}</ClipText></>}
      {id === 'V16' && <><Clip $x={1026} $w={270} $c="#303030" />{darkCuts.map(([x, w]) => <Clip key={x} $x={x} $w={w} $c="#202020" />)}</>}
      {smalls[id]?.map(([x, w], i) => (w > 2.500 ? <Mark key={i} $x={x} $w={w} $c={Y} /> : <Clip key={i} $x={x} $w={w} $c={Y} />))}
      {plains[id]?.map(([x, w], i) => (
        <Clip key={i} $x={x} $w={w} $c={Y}>
          {w > 200 && id === 'V19' && <><Fx $x={9} $c="#f4c010">fx</Fx><ClipText $x={29} $s={10} $ls={-0.200}>图片3.png</ClipText></>}
          {w > 200 && id === 'V15' && <><Fx $x={9} $c="#f4c010">fx</Fx><ClipText $x={29} $ls={0.300}>信息框</ClipText></>}
          {w > 200 && id === 'V8' && <><Fx $x={9} $c="#777">fx</Fx><ClipText $x={29} $s={10} $ls={0.300}>台标（模板）.png</ClipText></>}
        </Clip>
      ))}
    </>
  );
};

const TrackView = ({ id }: { id: string }) => (
  <TrackRow>
    <HeadArea>
      <SourcePatch>{id === 'V1' && <Badge $on>V1</Badge>}</SourcePatch>
      <Lock />
      <Gap $w={5} />
      <Badge $on={id === 'V3' || id === 'A1'}>{id}</Badge>
      <Gap $w={8} />
      <Sync />
      {id === 'A1' ? (
        <><Gap $w={7} /><Toggle $c="#4df0a8">M</Toggle><Toggle $c="#f4cd10">S</Toggle><Gap $w={8} /><Mic /></>
      ) : (
        <><Gap $w={14} /><Eye off={hidden.has(id)} /></>
      )}
    </HeadArea>
    <Lane><LaneContent id={id} /></Lane>
  </TrackRow>
);
const AudioGap = styled.div`
  height: 4px;
  background: #2a2a2a;
`;
const MasterRow = styled.div`
  display: flex;
  align-items: center;
  width: 236px;
  height: 13px;
  padding-left: 51px;
`;
const MasterWrap = styled.div`
  border-top: 1px solid #303030;
  border-bottom: 1px solid #303030;
  height: 16px;
`;
const Playhead = styled.i`
  position: absolute;
  left: 612px;
  top: -81px;
  width: 1px;
  height: 544px;
  background: #4cb8f5;
`;
const VScroll = styled.div`
  width: 10px;
  margin: -63px 0 0 1px;
  display: flex;
  flex-direction: column;
  gap: 7px;
`;
const VBar = styled.div<{ $h: number }>`
  height: ${p => p.$h}px;
  background: #303030;
  border-radius: 5px;
  display: flex;
  flex-direction: column;
  justify-content: space-between;
`;
const HScroll = styled.div`
  width: 643px;
  height: 12px;
  margin: 1px 0 0 13px;
  flex: none;
  border: 1px solid #2c2c2c;
  border-radius: 6px;
  background: #1c1c1c;
`;
const HThumb = styled.div`
  width: 493px;
  height: 10px;
  border-radius: 6px;
  background: #303030;
  display: flex;
  justify-content: space-between;
`;

const Timeline = () => (
  <TimelinePanel>
    <TopArea>
      <TopLeft>
        <Row $h={27} $pl={10} $pb={1}>
          <svg width="6" height="10"><path d="M1 4l4 4M5 4L1 8" stroke="#8c8c8c" /></svg>
          <Label $ml={12} $c="#c0c0c0" $ls={0.4}>根序列</Label>
          <Gap $w={8} />
          <Burger />
        </Row>
        <Row $h={30} $pl={19}>
          <Label $s={16} $c={BLUE} $b={500} $ls={0.45}>00:08:25:00</Label>
        </Row>
        <Row $h={44}>
          <svg width="230" height="16" viewBox="0 0 230 16">
            <g fill="none" stroke={BLUE} strokeWidth="1.500">
              <path d="M22 8h5M31 8h5M29 1v4M29 11v4M23 3l12 10M24 13l3-3M31 5l4-3M22 11h4M31 12h5" />
              <path d="M59 14V7q0-4.500 4-4.500T67 7v7" strokeWidth="2.500" />
            </g>
            <path d="M90 2h5v5h-5zM96.500 2h7.500v5l-7.500-4zM90 9h5v5h-5z" fill={BLUE} />
            <path d="M96.500 3.500l8 7.500-4.500.3-3.500 4z" fill={BLUE} />
            <path d="M128 4h7v5l-3.500 4-3.500-4z" fill={G} />
            <g transform="translate(159 1) scale(.95)"><path d="M2.500.5 5.500 3.500 5 5.500 3 6 0 3q-.5 4 2.500 5.500 2 .8 3.500 0L11.500 14q1 1 2.200.2 1-1.200 0-2.200L8 6.500Q9 4 7.500 2 5.500 0 2.500.5z" fill="#b0b0b0" /></g>
          </svg>
        </Row>
      </TopLeft>
      <TopRight>
        <RulerBox $h={30}>
          <RulerLabel $x={0} $top={2}>:00:00</RulerLabel>
          <RulerLabel $x={196} $top={2} $ls={-0.15}>00:05:00:00</RulerLabel>
          <svg width="420" height="30">
            {Array.from({ length: 29 }, (_, i) => (
              <path key={i} d={`M${Math.round(i * 14.880) + 0.5} ${i % 15 === 0 ? 16 : 22}V28`} stroke="#5a5a5a" />
            ))}
            <path d="M370 16h11v8l-4 4v-3h-3v3l-4-4z" fill={BLUE} />
          </svg>
        </RulerBox>
        <WorkBar>
          <WorkFill><svg width="6" height="5"><path d="M2.500 0v5M4.500 0v5M6.500 0v5" stroke="#333" /></svg></WorkFill>
          <svg width="8" height="13"><path d="M2.500 0h2l3 3v10h-5z" fill={BLUE} /></svg>
        </WorkBar>
      </TopRight>
    </TopArea>
    <Tracks>
      <TrackTable>
        {Array.from({ length: 27 }, (_, i) => <TrackView key={i} id={`V${27 - i}`} />)}
        <AudioGap />
        <TrackView id="A1" />
        <MasterWrap>
          <MasterRow>
            <Lock />
            <Label $ml={8} $s={12.5} $c="#8c8c8c" $w={66} $ls={0.500}>主声道</Label>
            <Label $ml={11} $s={10.500} $b={600} $c="#3aa0dc" $w={72}>0.0</Label>
            <svg width="12" height="10" viewBox="0 0 12 10"><path d="M0 0l5 4V2h2v2l5-4v10L7 6v2H5V6l-5 4z" fill={G} /></svg>
          </MasterRow>
        </MasterWrap>
        <Playhead />
      </TrackTable>
      <VScroll>
        <VBar $h={467}><Knob /><Knob /></VBar>
        <VBar $h={52}><Knob /><Knob /></VBar>
      </VScroll>
    </Tracks>
    <HScroll><HThumb><Knob /><Knob /></HThumb></HScroll>
  </TimelinePanel>
);

/* ---------- Status bar ---------- */

const StatusBar = styled.footer`
  height: 20px;
  margin-top: 2px;
  padding-bottom: 2px;
  flex: none;
  display: flex;
  align-items: center;
  background: #262626;
`;

/* ---------- Floating number pad ---------- */

const Keypad = styled.div`
  position: absolute;
  left: 535px;
  top: 550px;
  width: 140px;
  height: 181px;
  padding: 0 5px 6px;
  border: 1px solid #e8e8e8;
  border-radius: 6px;
  box-shadow: 0 0 0 1px #333, 0 2px 10px 2px #000a;
  background: linear-gradient(#8a8a8acc 0, #555b 22px, #777c 45px, #e8e8e8 55px, #e8e8e8 63px, #777 64px, #3c3c3c 150px, #666 100%);
`;
const PadTitle = styled.div`
  display: flex;
  align-items: flex-start;
  justify-content: space-between;
  height: 27px;
`;
const PadIcon = styled.svg`
  margin: 6px 0 0 1px;
`;
const PadClose = styled.div`
  width: 48px;
  height: 19px;
  margin-right: -1px;
  display: grid;
  place-items: center;
  border: 1px solid #f0c8c0;
  border-top: 0;
  border-radius: 0 0 4px 4px;
  background: linear-gradient(#d8988c, #c85c48 45%, #a82010 50%, #d06040);
`;
const PadBody = styled.div`
  height: 147px;
  border: 1px solid #222;
  outline: 1px solid #d0d0d0;
  background: #f0f0f0;
  padding: 6px 0 0 6px;
  display: grid;
  grid-template-columns: repeat(3, 28px);
  grid-auto-rows: 28px;
  gap: 7px;
`;
const Key = styled.button`
  padding: 0 0 1px;
  border: 1px solid #757575;
  border-radius: 3px;
  box-shadow: inset 0 0 0 1px #fafafa;
  background: linear-gradient(#f2f2f2 0, #ebebeb 50%, #dcdcdc 50%, #cfcfcf 100%);
  font: 12px ${UI};
  color: #111;
`;
const WinX = () => (
  <svg width="12" height="10" viewBox="0 0 12 10">
    <path d="M2 1l8 8M10 1L2 9" stroke="#444" strokeWidth="4.500" />
    <path d="M2 1l8 8M10 1L2 9" stroke="#fff" strokeWidth="2.500" />
  </svg>
);

/* ---------- Large translucent caption ---------- */

const Caption = styled.div`
  position: absolute;
  left: 0;
  top: 0;
  width: 1366px;
  height: 768px;
  pointer-events: none;
  font-family: "Open Sans", "Noto Sans CJK SC", sans-serif;
  font-weight: 300;
  line-height: 153px;
  color: rgba(255, 255, 255, 0.36);
  text-shadow: 6px 6px 0 rgba(0, 0, 0, 0.25);
`;
const CaptionWord = styled.span<{ $x: number; $y: number; $ls?: number; $s?: number }>`
  position: absolute;
  left: ${p => p.$x}px;
  top: ${p => p.$y}px;
  font-size: ${p => p.$s ?? 137}px;
  letter-spacing: ${p => p.$ls ?? 0}px;
  white-space: pre;
`;

export default function App() {
  return (
    <Screen>
      <GlobalStyle />
      <TaskbarView />
      <TitleBar>
        <PrLogo>Pr</PrLogo>
        <span>Adobe Premiere Pro CC 2018 - E:\DSY_xiaoluo\文件\其它\Pr项目文件\HOMO14\24\HOMO14 - 24.prproj *</span>
        <WindowButtons>
          <WinBtn $w={28}><svg width="12" height="5"><rect x=".5" y=".5" width="11" height="4" fill="#fff" stroke="#444" /></svg></WinBtn>
          <WinBtn $w={27}><svg width="12" height="12"><path d="M3 1h8v8H9M1.500 3h7v7h-7z" fill="none" stroke="#333" strokeWidth="3" /><path d="M3 1h8v8H9M1.500 3h7v7h-7z" fill="none" stroke="#fff" strokeWidth="1.400" /></svg></WinBtn>
          <WinBtn $w={47}><WinX /></WinBtn>
        </WindowButtons>
      </TitleBar>
      <MenuBar>
        {menus.map(([t, k, w]) => <MenuItem key={k} $w={w}>{t}(<u>{k}</u>)</MenuItem>)}
      </MenuBar>
      <Workspace>
        <Column $w={530}>
          <ProgramPanel />
          <EffectPanel />
        </Column>
        <MiddleColumn />
        <Timeline />
      </Workspace>
      <StatusBar>
        <Gap $w={2} />
        <svg width="16" height="12" viewBox="0 0 16 12"><path d="M4.500 10.500h6.500a4.500 4.500 0 1 0-4.500-5.500M4.500 10.500a3.500 3.500 0 1 1 3-5l3.500 3a2 2 0 1 0 0-4L6 8.500a2 2 0 1 1 0-3" fill="none" stroke="#909090" strokeWidth="1.300" /></svg>
        <Label $ml={39} $s={12.5} $c="#a0a0a0" $ls={0.52}>单击以选择，或单击空白处并拖动以进行框选。使用 Shift、Alt 和 Ctrl 可获得其他选项。</Label>
      </StatusBar>
      <Caption>
        <CaptionWord $x={307} $y={143} $ls={-4.5}>XLuoFox</CaptionWord>
        <CaptionWord $x={796} $y={143} $ls={-3}>.DSY</CaptionWord>
        <CaptionWord $x={271} $y={297} $ls={0}>HOMO</CaptionWord>
        <CaptionWord $x={684} $y={297} $ls={-14}>14</CaptionWord>
        <CaptionWord $x={857} $y={290}>-</CaptionWord>
        <CaptionWord $x={944} $y={297} $ls={-11}>24</CaptionWord>
        <CaptionWord $x={218} $y={449} $ls={-6}>PR</CaptionWord>
        <CaptionWord $x={414} $y={443}>-</CaptionWord>
        <CaptionWord $x={501} $y={457} $s={132} $ls={-4}>根序列截图</CaptionWord>
      </Caption>
      <Keypad>
        <PadTitle>
          <PadIcon width="17" height="14" viewBox="0 0 17 14">
            <rect x=".5" y="4.500" width="10" height="6" fill="#0a84ff" stroke="#fff" />
            <path d="M12 4v7M9 1h3l1 1 1-1h2M13 1v12M9 13h7" stroke="#555" fill="none" />
            <path d="M14.500 4v7" stroke="#fff" />
          </PadIcon>
          <PadClose><WinX /></PadClose>
        </PadTitle>
        <PadBody>
          {['1', '2', '3', '4', '5', '6', '7', '8', '9', '0', '.', 'Ent'].map(k => <Key key={k}>{k}</Key>)}
        </PadBody>
      </Keypad>
    </Screen>
  );
}
